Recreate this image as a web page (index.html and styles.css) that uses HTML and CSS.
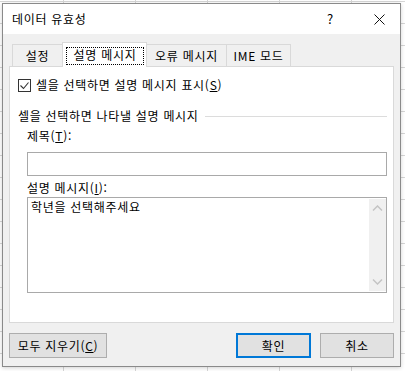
FILE: index.html
```html
<!DOCTYPE html>
<html lang="ko">
<head>
  <meta charset="UTF-8" />
  <meta name="viewport" content="width=device-width, initial-scale=1.0"/>
  <title>데이터 유효성</title>
  <link rel="stylesheet" href="styles.css">
</head>
<body>

  <div class="dialog">
    <!-- Title bar -->
    <div class="titlebar">
      <span class="title">데이터 유효성</span>
      <span class="help">?</span>
      <svg class="close" width="11" height="11" viewBox="0 0 11 11">
        <path d="M0.5 0.5 L10.5 10.5 M10.5 0.5 L0.5 10.5" stroke="#111" stroke-width="1" fill="none"/>
      </svg>
    </div>

    <div class="content">
      <div class="tabs">
        <div class="tab tab-setting">설정</div>
        <div class="tab tab-active"><span class="focus">설명 메시지</span></div>
        <div class="tab tab-error">오류 메시지</div>
        <div class="tab tab-ime">IME 모드</div>
      </div>

      <div class="panel">
        <label class="check-row">
          <span class="checkbox">
            <svg width="11" height="11" viewBox="0 0 11 11">
              <polyline points="1.5,5.5 4.5,8.5 9.5,2.5" stroke="#333" stroke-width="1.1" fill="none"/>
            </svg>
          </span>
          <span>셀을 선택하면 설명 메시지 표시(<u>S</u>)</span>
        </label>

        <div class="group-head">
          <span>셀을 선택하면 나타낼 설명 메시지</span>
          <span class="group-line"></span>
        </div>

        <div class="fields">
          <div class="field-label">제목(<u>T</u>):</div>
          <div class="textbox"></div>

          <div class="field-label label-msg">설명 메시지(<u>I</u>):</div>
          <div class="textarea">
            <div class="textarea-text">학년을 선택해주세요</div>
            <div class="scrollbar">
              <svg width="11" height="7" viewBox="0 0 11 7">
                <polyline points="1,5.5 5.5,1 10,5.5" stroke="#c4c4c4" stroke-width="1.5" fill="none"/>
              </svg>
              <svg width="11" height="7" viewBox="0 0 11 7">
                <polyline points="1,1.5 5.5,6 10,1.5" stroke="#c4c4c4" stroke-width="1.5" fill="none"/>
              </svg>
            </div>
          </div>
        </div>
      </div>

      <div class="actions">
        <button class="btn btn-clear">모두 지우기(<u>C</u>)</button>
        <span class="spacer"></span>
        <button class="btn btn-default">확인</button>
        <button class="btn btn-cancel">취소</button>
      </div>
    </div>
  </div>

</body>
</html>
```

FILE: styles.css
```css
:root {
  --face: #f0f0f0;
  --tab-border: #d9d9d9;
  --field-border: #a9a9a9;
  --text: #000;
  --accent: #0078d7;
  --font: "Noto Sans CJK KR", "Noto Sans", sans-serif;
}
* {
  margin: 0; padding: 0; box-sizing: border-box;
}
body {
  width: 405px; height: 371px; overflow: hidden;
  font-family: var(--font); font-size: 12px; line-height: 16px; color: var(--text);
  letter-spacing: 0.7px;
  background-color: #fff;
  background-image:
    linear-gradient(to right, #d6d6d6 1px, transparent 1px),
    linear-gradient(to bottom, #d6d6d6 1px, transparent 1px);
  background-size: 72px 100%, 100% 22px;
  background-position: 63px 0, 0 1px;
}

.dialog {
  width: 399px; height: 364px; margin: 3px 0 0 2px;
  border: 1px solid #8a8a8a; background: var(--face);
  box-shadow: 0 1px 4px rgba(0,0,0,0.18);
  display: flex; flex-direction: column;
}

.titlebar {
  height: 30px; background: #fff;
  display: flex; align-items: center; padding: 0 0 0 9px;
}
.title { flex: 1; }
.help { width: 12px; text-align: center; margin-right: 38px; font-size: 13px; letter-spacing: 0; }
.close { margin-right: 15px; }

.content {
  flex: 1; padding: 8px 6px 8px;
  display: flex; flex-direction: column;
}

.tabs {
  height: 24px; padding-left: 3px;
  display: flex; align-items: flex-end;
}
.tab {
  height: 22px; text-align: center; line-height: 21px;
  border: 1px solid var(--tab-border); border-bottom: none;
  background: var(--face);
}
.tab-setting { width: 50px; border-right: none; }
.tab-active {
  width: 85px; height: 25px; margin-bottom: -1px; position: relative;
  background: #fff; padding: 4px 2px 0 3px; line-height: 16px;
}
.tab-active .focus {
  display: block; height: 18px; line-height: 16px;
  outline: 1px dotted #000; outline-offset: -1px;
}
.tab-error { width: 80px; border-left: none; }
.tab-ime { width: 64px; border-left: none; }

.panel {
  height: 257px; background: #fff;
  border: 1px solid var(--tab-border);
  padding: 10px 6px 0 8px;
}

.check-row {
  display: flex; align-items: center; gap: 5px; height: 16px;
}
.checkbox {
  width: 13px; height: 13px; border: 1px solid #333; background: #fff;
  display: flex; align-items: center; justify-content: center;
}

.group-head {
  margin-top: 15px; display: flex; align-items: center; gap: 6px;
}
.group-line { flex: 1; height: 1px; background: #dcdcdc; }

.fields { margin-left: 9px; }
.field-label { margin-top: 4px; height: 16px; }
.textbox {
  margin-top: 8px; height: 24px;
  border: 1px solid var(--field-border); background: #fff;
}
.label-msg { margin-top: 4px; }
.textarea {
  margin-top: 1px; height: 96px;
  border: 1px solid var(--field-border); background: #fff;
  display: flex;
}
.textarea-text { flex: 1; padding: 1px 3px; }
.scrollbar {
  width: 17px; margin: 1px 0; background: var(--face);
  display: flex; flex-direction: column; justify-content: space-between; align-items: center;
  padding: 6px 0 6px;
}

.actions {
  margin-top: 10px; display: flex; align-items: center;
}
.spacer { flex: 1; }
.btn {
  height: 25px; font-family: var(--font); font-size: 12px; line-height: 16px; color: var(--text);
  letter-spacing: 0.7px;
  background: #e1e1e1; border: 1px solid #adadad;
}
.btn-clear { width: 98px; }
.btn-default { width: 75px; border: 2px solid var(--accent); margin-right: 9px; }
.btn-cancel { width: 74px; }
```
